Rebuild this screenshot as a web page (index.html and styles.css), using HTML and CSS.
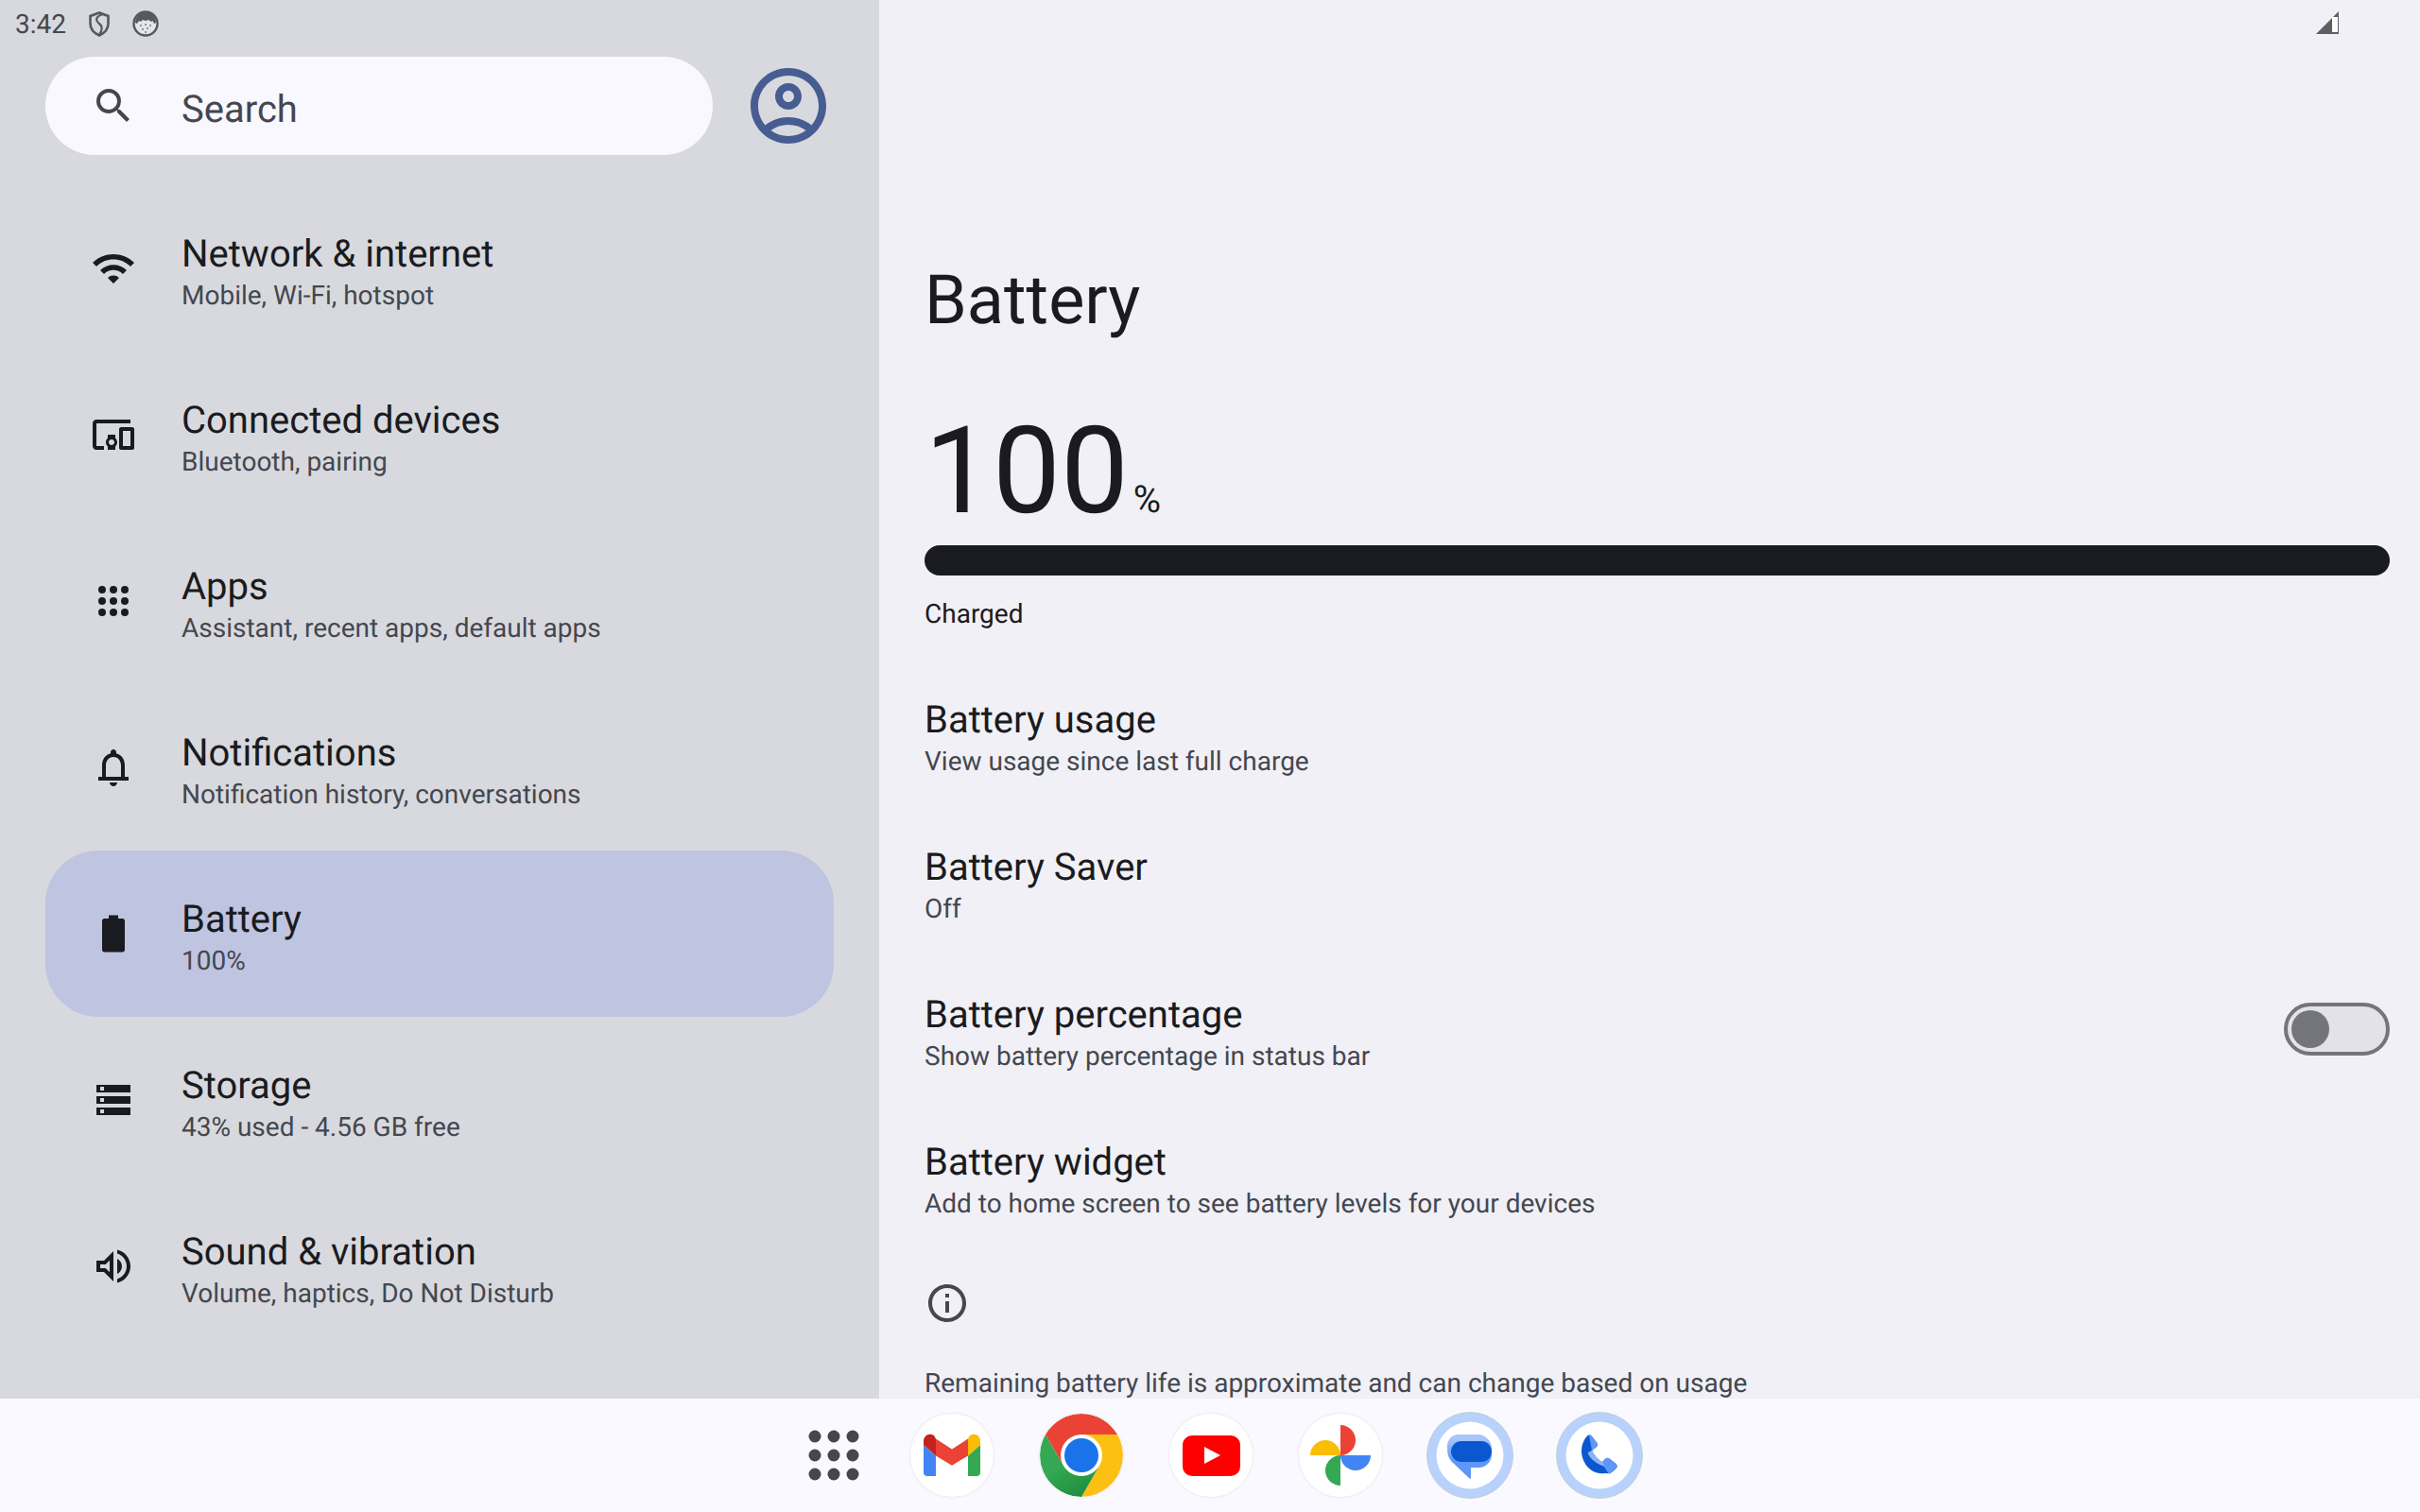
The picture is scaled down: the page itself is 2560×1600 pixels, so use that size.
FILE: index.html
```html
<!DOCTYPE html>
<html lang="en">
<head>
    <meta charset="UTF-8">
    <title>Settings - Battery</title>
    <link rel="stylesheet" href="styles.css">
</head>
<body>
    <div class="main">
        <!-- Left pane -->
        <div class="nav-pane">
            <div class="status">
                <span class="clock">3:42</span>
                <svg class="status-shield" viewBox="0 0 22 27"><path fill="none" stroke="#56585f" stroke-width="2.600" d="M11 1.500 1.500 5v8c0 6 4 10 9.500 12.500 5.500-2.500 9.500-6.500 9.500-12.500V5z"/><path fill="none" stroke="#56585f" stroke-width="2.200" d="M15 3C8 5 6 9 11 13c4 3 3 8 0 11"/></svg>
                <svg class="status-face" viewBox="0 0 28 28"><circle cx="14" cy="14" r="12.500" fill="#e6e6ea" stroke="#56585f" stroke-width="2.400"/><path fill="#56585f" d="M3 13a11 11 0 0 1 22 0l-2 1-1.500-3-2 1-2-2-3.500 1-3-1-2 2-2-1L5 14z"/><g fill="#6c6e75"><circle cx="9" cy="16" r=".9"/><circle cx="14" cy="15" r=".9"/><circle cx="19" cy="16" r=".9"/><circle cx="11" cy="20" r=".9"/><circle cx="16" cy="19" r=".9"/><circle cx="14" cy="23" r=".9"/></g></svg>
            </div>

            <div class="search-row">
                <div class="search">
                    <svg class="icon" viewBox="0 0 24 24"><path fill="#44474f" d="M15.500 14h-.79l-.28-.27A6.471 6.471 0 0 0 16 9.500 6.500 6.500 0 1 0 9.500 16c1.610 0 3.090-.59 4.230-1.570l.27.28v.79l5 4.990L20.490 19l-4.990-5zm-6 0C7.010 14 5 11.990 5 9.500S7.010 5 9.500 5 14 7.010 14 9.500 11.990 14 9.500 14z"/></svg>
                    <span class="search-text">Search</span>
                </div>
                <svg class="avatar" viewBox="0 0 24 24"><path fill="#475d92" d="M12 2C6.480 2 2 6.480 2 12s4.480 10 10 10 10-4.480 10-10S17.520 2 12 2zM7.350 18.500C8.660 17.560 10.260 17 12 17s3.340.56 4.650 1.500c-1.310.94-2.910 1.500-4.650 1.500s-3.340-.56-4.650-1.500zm10.790-1.380C16.450 15.800 14.320 15 12 15s-4.450.8-6.140 2.120C4.700 15.730 4 13.950 4 12c0-4.420 3.580-8 8-8s8 3.580 8 8c0 1.950-.7 3.730-1.860 5.120zM12 6c-1.930 0-3.500 1.570-3.500 3.500S10.070 13 12 13s3.500-1.570 3.500-3.500S13.930 6 12 6zm0 5c-.83 0-1.500-.67-1.500-1.500S11.170 8 12 8s1.500.67 1.500 1.500S12.830 11 12 11z"/></svg>
            </div>

            <div class="nav-list">
                <div class="nav-item">
                    <svg class="icon" viewBox="0 0 24 24"><path d="M1 9l2 2c4.970-4.970 13.030-4.970 18 0l2-2C16.930 2.930 7.080 2.930 1 9zm8 8l3 3 3-3c-1.650-1.660-4.340-1.660-6 0zm-4-4l2 2c2.760-2.760 7.240-2.760 10 0l2-2C15.140 9.140 8.870 9.140 5 13z"/></svg>
                    <div class="item-text">
                        <div class="item-title">Network &amp; internet</div>
                        <div class="item-sub">Mobile, Wi-Fi, hotspot</div>
                    </div>
                </div>
                <div class="nav-item">
                    <svg class="icon" viewBox="0 0 24 24"><path d="M3 6h18V4H3C1.900 4 1 4.900 1 6v12c0 1.100.9 2 2 2h4v-2H3V6zM13 12H9v1.780C8.390 14.330 8 15.110 8 16c0 .89.39 1.670 1 2.220V20h4v-1.780c.61-.55 1-1.340 1-2.220s-.39-1.670-1-2.220V12zM11 17.500c-.83 0-1.500-.67-1.500-1.500s.67-1.500 1.500-1.500 1.500.67 1.500 1.500-.67 1.500-1.500 1.500zM22 8h-6c-.5 0-1 .5-1 1v10c0 .5.5 1 1 1h6c.5 0 1-.5 1-1V9c0-.5-.5-1-1-1zM21 18h-4v-8h4v8z"/></svg>
                    <div class="item-text">
                        <div class="item-title">Connected devices</div>
                        <div class="item-sub">Bluetooth, pairing</div>
                    </div>
                </div>
                <div class="nav-item">
                    <svg class="icon" viewBox="0 0 24 24"><circle cx="6" cy="6" r="2"/><circle cx="12" cy="6" r="2"/><circle cx="18" cy="6" r="2"/><circle cx="6" cy="12" r="2"/><circle cx="12" cy="12" r="2"/><circle cx="18" cy="12" r="2"/><circle cx="6" cy="18" r="2"/><circle cx="12" cy="18" r="2"/><circle cx="18" cy="18" r="2"/></svg>
                    <div class="item-text">
                        <div class="item-title">Apps</div>
                        <div class="item-sub">Assistant, recent apps, default apps</div>
                    </div>
                </div>
                <div class="nav-item">
                    <svg class="icon" viewBox="0 0 24 24"><path d="M18 17v-6c0-3.070-1.630-5.640-4.500-6.320V4c0-.83-.67-1.500-1.500-1.500s-1.500.67-1.500 1.500v.68C7.640 5.360 6 7.920 6 11v6H4v2h16v-2h-2zM16 17H8v-6c0-2.480 1.510-4.500 4-4.500s4 2.020 4 4.500v6zM12 22c1.100 0 2-.9 2-2h-4c0 1.100.9 2 2 2z"/></svg>
                    <div class="item-text">
                        <div class="item-title">Notifications</div>
                        <div class="item-sub">Notification history, conversations</div>
                    </div>
                </div>
                <div class="nav-item active">
                    <svg class="icon" viewBox="0 0 24 24"><path d="M16.800 4H14.500V2.200h-5V4H7.200C6.500 4 6 4.500 6 5.200v15.300c0 .7.5 1.200 1.200 1.200h9.600c.7 0 1.200-.5 1.200-1.200V5.200C18 4.500 17.500 4 16.800 4z"/></svg>
                    <div class="item-text">
                        <div class="item-title">Battery</div>
                        <div class="item-sub">100%</div>
                    </div>
                </div>
                <div class="nav-item">
                    <svg class="icon" viewBox="0 0 24 24"><path fill-rule="evenodd" d="M3 4h18v4H3zM5 5v2h2V5zM3 10h18v4H3zM5 11v2h2v-2zM3 16h18v4H3zM5 17v2h2v-2z"/></svg>
                    <div class="item-text">
                        <div class="item-title">Storage</div>
                        <div class="item-sub">43% used - 4.56 GB free</div>
                    </div>
                </div>
                <div class="nav-item">
                    <svg class="icon" viewBox="0 0 24 24"><path d="M3 9v6h4l5 5V4L7 9H3zM10 8.830v6.340L7.830 13H5v-2h2.830L10 8.830zM14 7.970v8.050c1.480-.73 2.500-2.250 2.500-4.020 0-1.770-1.020-3.290-2.500-4.030zM14 3.230v2.060c2.890.86 5 3.540 5 6.710s-2.110 5.850-5 6.710v2.060c4.010-.91 7-4.490 7-8.770s-2.990-7.860-7-8.770z"/></svg>
                    <div class="item-text">
                        <div class="item-title">Sound &amp; vibration</div>
                        <div class="item-sub">Volume, haptics, Do Not Disturb</div>
                    </div>
                </div>
            </div>
        </div>

        <!-- Right pane -->
        <div class="detail-pane">
            <div class="status status-right">
                <svg class="status-signal" viewBox="0 0 26 26"><path fill="#5f5f62" d="M25 1v24H1z"/><path fill="#fff" d="M18 7h6v16h-6z"/></svg>
            </div>
            <h1 class="page-title">Battery</h1>
            <div class="level">100<span class="level-unit">%</span></div>
            <div class="level-bar"></div>
            <div class="level-state">Charged</div>

            <div class="detail-list">
                <div class="detail-item">
                    <div class="item-text">
                        <div class="item-title">Battery usage</div>
                        <div class="item-sub">View usage since last full charge</div>
                    </div>
                </div>
                <div class="detail-item">
                    <div class="item-text">
                        <div class="item-title">Battery Saver</div>
                        <div class="item-sub">Off</div>
                    </div>
                </div>
                <div class="detail-item">
                    <div class="item-text">
                        <div class="item-title">Battery percentage</div>
                        <div class="item-sub">Show battery percentage in status bar</div>
                    </div>
                    <div class="toggle"><div class="toggle-thumb"></div></div>
                </div>
                <div class="detail-item">
                    <div class="item-text">
                        <div class="item-title">Battery widget</div>
                        <div class="item-sub">Add to home screen to see battery levels for your devices</div>
                    </div>
                </div>
            </div>

            <svg class="icon info-icon" viewBox="0 0 24 24"><path fill="#44474f" d="M11 7h2v2h-2zm0 4h2v6h-2zm1-9C6.480 2 2 6.480 2 12s4.480 10 10 10 10-4.480 10-10S17.520 2 12 2zm0 18c-4.410 0-8-3.590-8-8s3.590-8 8-8 8 3.590 8 8-3.590 8-8 8z"/></svg>
            <p class="footnote">Remaining battery life is approximate and can change based on usage</p>
        </div>
    </div>

    <!-- Dock -->
    <div class="dock">
        <div class="dock-slot dock-slot-apps">
            <svg class="dock-grid" viewBox="0 0 54 54"><g fill="#44474f"><circle cx="7" cy="7" r="6.500"/><circle cx="27" cy="7" r="6.500"/><circle cx="47" cy="7" r="6.500"/><circle cx="7" cy="27" r="6.500"/><circle cx="27" cy="27" r="6.500"/><circle cx="47" cy="27" r="6.500"/><circle cx="7" cy="47" r="6.500"/><circle cx="27" cy="47" r="6.500"/><circle cx="47" cy="47" r="6.500"/></g></svg>
        </div>
        <div class="dock-slot">
            <svg class="app-icon" viewBox="0 0 88 88">
                <circle cx="44" cy="44" r="44" fill="#fff"/>
                <path fill="#4285f4" d="M14 33l13 11.500V66h-9a4 4 0 0 1-4-4z"/>
                <path fill="#34a853" d="M74 33L61 44.500V66h9a4 4 0 0 0 4-4z"/>
                <path fill="#ea4335" d="M27 26.500l17 11 17-11v18l-17 10.200-17-10.200z"/>
                <path fill="#c5221f" d="M14 28a7 7 0 0 1 11-5l2 3.500v18L14 33z"/>
                <path fill="#fbbc04" d="M74 28a7 7 0 0 0-11-5l-2 3.500v18L74 33z"/>
            </svg>
        </div>
        <div class="dock-slot">
            <svg class="app-icon" viewBox="0 0 88 88">
                <defs>
                    <linearGradient id="chrome-green" x1="0.2" y1="0.1" x2="0.7" y2="1">
                        <stop offset="0.4" stop-color="#34a853"/>
                        <stop offset="1" stop-color="#1e8e3e"/>
                    </linearGradient>
                </defs>
                <circle cx="44" cy="44" r="44" fill="#fff"/>
                <path fill="#ea4335" d="M44 22h38.100A44 44 0 0 0 5.900 22L25 55a22 22 0 0 1 19-33z"/>
                <path fill="#fcc012" d="M44 22h38.100A44 44 0 0 1 44 88l19-33a22 22 0 0 0-19-33z"/>
                <path fill="url(#chrome-green)" d="M25 55L5.900 22A44 44 0 0 0 44 88l19-33a22 22 0 0 1-38 0z"/>
                <circle cx="44" cy="44" r="18" fill="#1a73e8"/>
            </svg>
        </div>
        <div class="dock-slot">
            <svg class="app-icon" viewBox="0 0 88 88">
                <circle cx="44" cy="44" r="44" fill="#fff"/>
                <rect x="14" y="23" width="61" height="43" rx="10" fill="#f00"/>
                <path fill="#fff" d="M37 35l17 9-17 9z"/>
            </svg>
        </div>
        <div class="dock-slot">
            <svg class="app-icon" viewBox="0 0 88 88">
                <circle cx="44" cy="44" r="44" fill="#fff"/>
                <path fill="#ea4335" d="M44 12a16 16 0 0 1 0 32z"/>
                <path fill="#4285f4" d="M44 44h32a16 16 0 0 1-32 0z"/>
                <path fill="#34a853" d="M44 44v32a16 16 0 0 1 0-32z"/>
                <path fill="#fbbc04" d="M44 44H12a16 16 0 0 1 32 0z"/>
            </svg>
        </div>
        <div class="dock-slot">
            <svg class="app-icon-ring" viewBox="0 0 92 92">
                <defs>
                    <linearGradient id="bubble-light" x1="0" y1="0" x2="0" y2="1">
                        <stop offset="0.1" stop-color="#a9c5fa"/>
                        <stop offset="0.6" stop-color="#5f97f8"/>
                    </linearGradient>
                </defs>
                <circle cx="46" cy="46" r="45.500" fill="#b8d2fb" stroke="#c4c7cf" stroke-width=".8"/>
                <circle cx="46" cy="46" r="35.500" fill="#fff"/>
                <path fill="url(#bubble-light)" d="M33 24h21a15 15 0 0 1 15 15v6a14 14 0 0 1-14 14h-8v11.500h-1.500L27 53q-5-5-5-13v-4a12 12 0 0 1 11-12z"/>
                <rect x="26" y="31" width="43" height="22" rx="11" fill="#0b57d0"/>
            </svg>
        </div>
        <div class="dock-slot">
            <svg class="app-icon-ring" viewBox="0 0 92 92">
                <circle cx="46" cy="46" r="45.500" fill="#b8d2fb" stroke="#c4c7cf" stroke-width=".8"/>
                <circle cx="46" cy="46" r="35.500" fill="#fff"/>
                <path fill="#0b57d0" d="M33 25.500c1.500-1.500 3.500-1.500 5 .5l5.500 7c1 1.500.5 3-.5 4L38 41c2 5 6 9 11 12.500l3.500-4c1-1 2.500-1 4 0l7 5.500c1.500 1.500 1.500 3.500 0 5l-2 2c-3 3-7 3.500-10 3C38 67 27 55 27 41c0-5 2-11 6-15.500z"/>
                <path fill="#5f97f8" d="M35 24.700c1.200-.4 2.200 0 3 1.300l5.500 7c1 1.500.5 3-.5 4l-5 4zM48 53.500l4.500-4c1-1 2.500-1 4 0l7 5.500c1.500 1.500 1.500 3.500 0 5l-3 3-4.500 3z"/>
                <path fill="#8ab4f8" d="M38 40.500c2 5.500 6 9.500 11 12.500l2.500 5c-8.500-3-15.500-8-18-14.500z"/>
            </svg>
        </div>
    </div>
</body>
</html>
```

FILE: styles.css
```css
* {
    margin: 0;
    padding: 0;
    box-sizing: border-box;
}

body {
    width: 2560px;
    height: 1600px;
    overflow: hidden;
    font-family: 'Roboto', sans-serif;
    text-rendering: geometricPrecision;
    color: #1a1b20;
    background-color: #faf9ff;
}

.main {
    display: flex;
    height: 1480px;
}

/* Status bar */
.status {
    display: flex;
    align-items: center;
    height: 60px;
    padding-left: 16px;
    padding-bottom: 10px;
}

.status-right {
    justify-content: flex-end;
    padding: 0 85px 12px 0;
}

.clock {
    font-size: 28px;
    color: #44474f;
    margin-right: 24px;
}

.status-shield {
    width: 22px;
    height: 27px;
    margin-right: 24px;
}

.status-face {
    width: 28px;
    height: 28px;
}

.status-signal {
    width: 26px;
    height: 26px;
}

/* Left pane */
.nav-pane {
    width: 930px;
    height: 100%;
    overflow: hidden;
    background-color: #d8d9de;
}

.search-row {
    display: flex;
    align-items: center;
    height: 104px;
    margin-left: 48px;
}

.search {
    display: flex;
    align-items: center;
    gap: 48px;
    width: 706px;
    height: 104px;
    padding-left: 48px;
    border-radius: 52px;
    background-color: #f9f8ff;
}

.search-text {
    font-size: 40px;
    margin-top: 6px;
    color: #44474f;
}

.avatar {
    width: 96px;
    height: 96px;
    margin-left: 32px;
}

.icon {
    flex-shrink: 0;
    width: 48px;
    height: 48px;
    fill: #1a1b20;
}

.nav-list {
    margin: 32px 0 0 48px;
    width: 834px;
}

.nav-item {
    display: flex;
    align-items: center;
    gap: 48px;
    height: 176px;
    padding-left: 48px;
    border-radius: 56px;
}

.nav-item.active {
    background-color: #bfc4e0;
}

.nav-item .item-text {
    padding-top: 10px;
}

.item-title {
    font-size: 40px;
    line-height: 48px;
    color: #1a1b20;
}

.item-sub {
    font-size: 28px;
    line-height: 40px;
    color: #44474f;
}

/* Right pane */
.detail-pane {
    flex: 1;
    height: 100%;
    overflow: hidden;
    padding-left: 48px;
    background-color: #f1f0f6;
}

.page-title {
    font-size: 72px;
    font-weight: 400;
    line-height: 80px;
    margin-top: 218px;
}

.level {
    font-size: 128px;
    line-height: 140px;
    margin-top: 71px;
}

.level-unit {
    font-size: 40px;
    line-height: 1;
    margin-left: 5px;
}

.level-bar {
    width: 1550px;
    height: 32px;
    margin-top: 8px;
    border-radius: 16px;
    background-color: #1a1b20;
}

.level-state {
    font-size: 28px;
    line-height: 40px;
    margin-top: 21px;
}

.detail-list {
    margin-top: 34px;
    width: 1550px;
}

.detail-item {
    display: flex;
    align-items: center;
    justify-content: space-between;
    height: 156px;
}

.toggle {
    width: 112px;
    height: 56px;
    margin-bottom: 10px;
    padding: 4px;
    border: 4px solid #74747c;
    border-radius: 28px;
    background-color: #e2e2e8;
}

.toggle-thumb {
    width: 40px;
    height: 40px;
    border-radius: 50%;
    background-color: #74747c;
}

.info-icon {
    display: block;
    margin-top: 27px;
}

.footnote {
    font-size: 28px;
    line-height: 32px;
    margin-top: 45px;
    color: #44474f;
}

/* Dock */
.dock {
    display: flex;
    align-items: center;
    height: 120px;
    padding-left: 824px;
    background-color: #faf9ff;
}

.dock-slot {
    display: flex;
    justify-content: center;
    width: 137px;
}

.dock-slot-apps {
    width: 114px;
}

.dock-grid {
    width: 54px;
    height: 54px;
    margin-left: 1px;
}

.app-icon {
    width: 88px;
    height: 88px;
    border-radius: 50%;
    box-shadow: 0 0 3px rgba(0, 0, 0, 0.12);
}

.app-icon-ring {
    width: 92px;
    height: 92px;
}
```
